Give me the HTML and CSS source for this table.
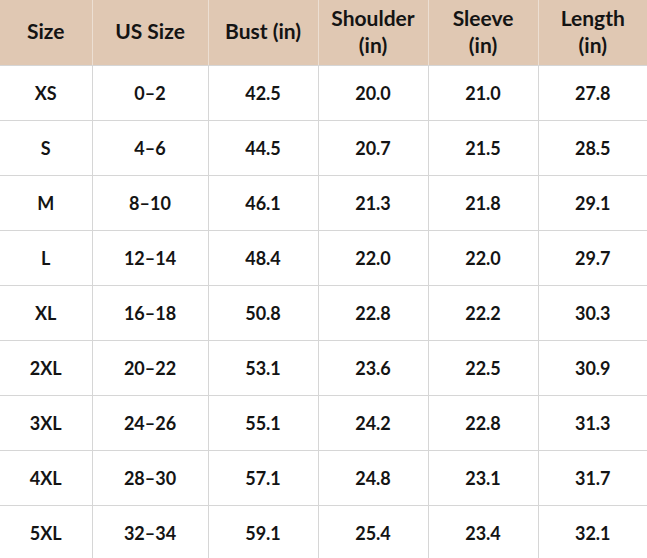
FILE: index.html
```html
<!DOCTYPE html>
<html>
<head>
<meta charset="utf-8">
<link rel="stylesheet" href="styles.css">
</head>
<body>
<table class="size-table">
  <colgroup>
    <col class="c1"><col class="c2"><col class="c3"><col class="c4"><col class="c5"><col class="c6">
  </colgroup>
  <thead>
    <tr>
      <th>Size</th><th>US Size</th><th>Bust (in)</th><th>Shoulder<br>(in)</th><th>Sleeve<br>(in)</th><th>Length<br>(in)</th>
    </tr>
  </thead>
  <tbody>
    <tr><td>XS</td><td>0–2</td><td>42.5</td><td>20.0</td><td>21.0</td><td>27.8</td></tr>
    <tr><td>S</td><td>4–6</td><td>44.5</td><td>20.7</td><td>21.5</td><td>28.5</td></tr>
    <tr><td>M</td><td>8–10</td><td>46.1</td><td>21.3</td><td>21.8</td><td>29.1</td></tr>
    <tr><td>L</td><td>12–14</td><td>48.4</td><td>22.0</td><td>22.0</td><td>29.7</td></tr>
    <tr><td>XL</td><td>16–18</td><td>50.8</td><td>22.8</td><td>22.2</td><td>30.3</td></tr>
    <tr><td>2XL</td><td>20–22</td><td>53.1</td><td>23.6</td><td>22.5</td><td>30.9</td></tr>
    <tr><td>3XL</td><td>24–26</td><td>55.1</td><td>24.2</td><td>22.8</td><td>31.3</td></tr>
    <tr><td>4XL</td><td>28–30</td><td>57.1</td><td>24.8</td><td>23.1</td><td>31.7</td></tr>
    <tr><td>5XL</td><td>32–34</td><td>59.1</td><td>25.4</td><td>23.4</td><td>32.1</td></tr>
  </tbody>
</table>
</body>
</html>
```
FILE: styles.css
```css
html, body {
  margin: 0;
  padding: 0;
  background: #ffffff;
}
.size-table {
  width: 647px;
  border-collapse: collapse;
  table-layout: fixed;
  font-family: Lato, "Open Sans", "Liberation Sans", sans-serif;
  font-weight: 700;
  color: #141414;
}
.c1 { width: 92px; }
.c2 { width: 116px; }
.c3 { width: 110px; }
.c4 { width: 110px; }
.c5 { width: 110px; }
.c6 { width: 109px; }
.size-table th {
  background: #e0c8b3;
  height: 61px;
  padding: 0 0 4px 0;
  font-size: 21px;
  line-height: 27px;
  font-weight: 700;
  border-left: 1px solid #ecdfd3;
  border-bottom: 1px solid #d6d6d6;
  text-align: center;
  vertical-align: middle;
}
.size-table td {
  height: 54px;
  padding: 0;
  font-size: 18px;
  text-align: center;
  vertical-align: middle;
  border-left: 1px solid #d6d6d6;
  border-bottom: 1px solid #d6d6d6;
}
.size-table tr > :first-child {
  border-left: none;
}
.size-table tbody tr:last-child td {
  border-bottom: none;
}
```
